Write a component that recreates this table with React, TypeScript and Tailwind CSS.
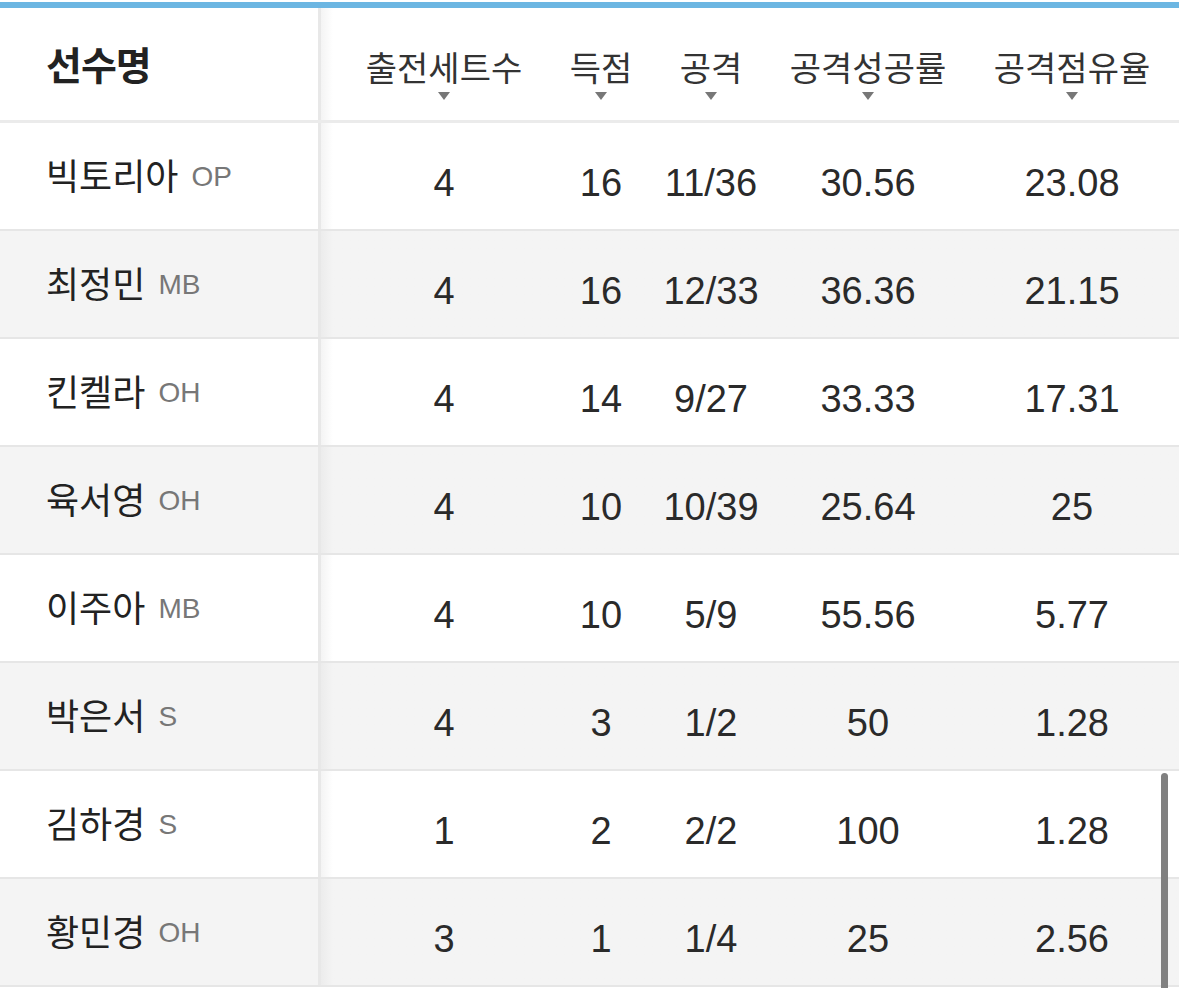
import React from "react";

interface Row {
  name: string;
  pos: string;
  sets: string;
  points: string;
  attack: string;
  rate: string;
  share: string;
}

const ROWS: Row[] = [
  { name: "빅토리아", pos: "OP", sets: "4", points: "16", attack: "11/36", rate: "30.56", share: "23.08" },
  { name: "최정민", pos: "MB", sets: "4", points: "16", attack: "12/33", rate: "36.36", share: "21.15" },
  { name: "킨켈라", pos: "OH", sets: "4", points: "14", attack: "9/27", rate: "33.33", share: "17.31" },
  { name: "육서영", pos: "OH", sets: "4", points: "10", attack: "10/39", rate: "25.64", share: "25" },
  { name: "이주아", pos: "MB", sets: "4", points: "10", attack: "5/9", rate: "55.56", share: "5.77" },
  { name: "박은서", pos: "S", sets: "4", points: "3", attack: "1/2", rate: "50", share: "1.28" },
  { name: "김하경", pos: "S", sets: "1", points: "2", attack: "2/2", rate: "100", share: "1.28" },
  { name: "황민경", pos: "OH", sets: "3", points: "1", attack: "1/4", rate: "25", share: "2.56" },
];

const COLS = [
  { label: "출전세트수", w: "w-[246px]" },
  { label: "득점", w: "w-[68px]" },
  { label: "공격", w: "w-[152px]" },
  { label: "공격성공률", w: "w-[162px]" },
  { label: "공격점유율", w: "w-[246px]" },
];

const KR = '"Noto Sans CJK KR", sans-serif';

function Caret() {
  return (
    <svg width="12" height="8" viewBox="0 0 12 8" className="mt-[7px]">
      <path d="M0 0 L12 0 L6 8 Z" fill="#777777" />
    </svg>
  );
}

export default function App() {
  return (
    <div
      className="relative w-[1179px] h-[988px] overflow-hidden bg-white text-[#222222]"
      style={{ fontFamily: '"Liberation Sans", "Noto Sans CJK KR", sans-serif' }}
    >
      {/* top accent */}
      <div className="h-[2px] bg-white" />
      <div className="h-[6px] bg-[#6cb6e2]" />

      {/* header */}
      <div className="flex h-[115px] border-b-[3px] border-[#ebebeb]">
        <div className="w-[318px] shrink-0 flex items-center pl-[46px] pb-[2px]">
          <span className="text-[39px] font-bold tracking-[-1px]" style={{ fontFamily: KR }}>
            선수명
          </span>
        </div>
        <div className="w-[3px] shrink-0 bg-[#e8e8e8]" />
        <div className="flex shrink-0 bg-gradient-to-r from-[#f4f4f4] to-white to-[12px]">
          {COLS.map((c, i) => (
            <div key={i} className={`${c.w} shrink-0 flex flex-col items-center pt-[41px]`}>
              <span className="text-[34px] leading-[36px] text-[#333333]" style={{ fontFamily: KR }}>
                {c.label}
              </span>
              <Caret />
            </div>
          ))}
        </div>
      </div>

      {/* rows */}
      {ROWS.map((r, i) => (
        <div
          key={r.name}
          className={`flex h-[108px] border-b-2 border-[#e6e6e6] ${i % 2 === 1 ? "bg-[#f4f4f4]" : "bg-white"}`}
        >
          <div className="w-[318px] shrink-0 flex items-center pl-[46px] pb-[4px]">
            <span className="text-[36px] leading-[44px]" style={{ fontFamily: KR }}>
              {r.name}
            </span>
            <span className="ml-[13px] mt-[6px] text-[28px] leading-[32px] text-[#777777]">{r.pos}</span>
          </div>
          <div className="w-[3px] shrink-0 bg-[#e8e8e8]" />
          <div className={`flex shrink-0 ${i % 2 === 1 ? "bg-gradient-to-r from-[#ececec] to-[#f4f4f4] to-[12px]" : "bg-gradient-to-r from-[#f4f4f4] to-white to-[12px]"}`}>
            {[r.sets, r.points, r.attack, r.rate, r.share].map((v, j) => (
              <div key={j} className={`${COLS[j].w} shrink-0 flex items-center justify-center pt-[15px] text-[38px] text-[#2a2a2a]`}>
                {v}
              </div>
            ))}
          </div>
        </div>
      ))}

      {/* scrollbar */}
      <div className="absolute left-[1161px] top-[773px] w-[7px] h-[230px] rounded-full bg-[#808080]" />
    </div>
  );
}
